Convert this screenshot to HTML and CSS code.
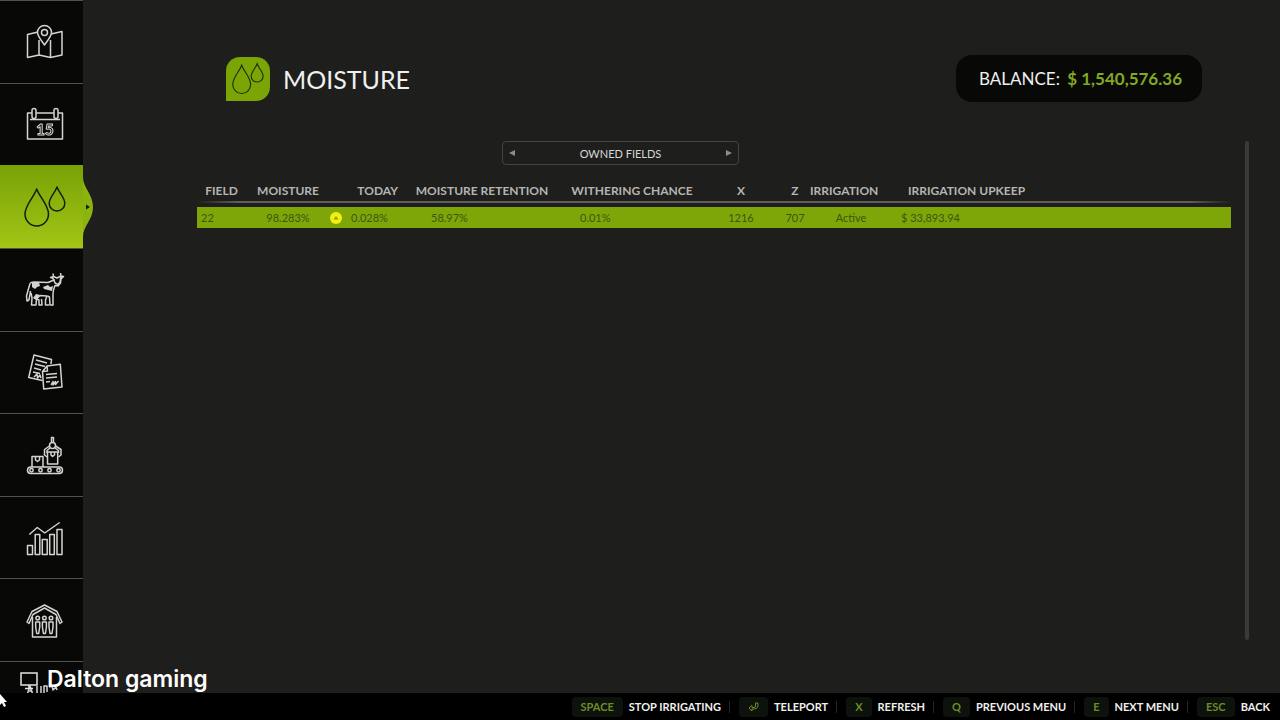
FILE: index.html
```html
<!DOCTYPE html>
<html lang="en">
<head>
    <meta charset="UTF-8">
    <meta name="viewport" content="width=device-width, initial-scale=1.0">
    <title>Moisture</title>
    <link rel="stylesheet" href="styles.css">
</head>
<body>
    <div class="main">
        <nav class="sidebar">
            <a href="#map" class="item" aria-label="Map">
                <svg class="icon" viewBox="0 0 40 40">
                    <path d="M14 10L3.500 12.500V35.500L15 33L26.500 35.500L38 33V9.500L27 12M15 18V33M26.500 18V35.500"/>
                    <path d="M20.500 23C17 18 13.500 14 13.500 10.500A7 7 0 0 1 27.500 10.500C27.500 14 24 18 20.500 23Z"/>
                    <circle cx="20.500" cy="10.500" r="3"/>
                </svg>
            </a>
            <a href="#calendar" class="item" aria-label="Calendar">
                <svg class="icon" viewBox="0 0 40 40">
                    <path d="M8 9H3.500V35H38.500V9H34M12 9H30M6 15.500H36"/>
                    <rect x="8" y="4.500" width="4" height="10" rx="2"/>
                    <rect x="30" y="4.500" width="4" height="10" rx="2"/>
                    <text class="day" x="21" y="31" text-anchor="middle">15</text>
                </svg>
            </a>
            <a href="#moisture" class="item active" aria-label="Moisture">
                <svg class="bulge" viewBox="0 0 10 60">
                    <path class="bulge-shape" d="M0 0C0 11 10 17 10 30S0 49 0 60Z"/>
                    <path class="bulge-arrow" d="M3 27.500L7 30L3 32.500Z"/>
                </svg>
                <svg class="icon" viewBox="0 0 40 40">
                    <path d="M12.700 2C10 10 1 18 1 27A11.700 12 0 0 0 24.500 27C24.500 18 15.500 10 12.700 2Z"/>
                    <path d="M33 0C31 6 25.200 10.500 25.200 16.500A7.800 7.500 0 0 0 40.800 16.500C40.800 10.500 35 6 33 0Z"/>
                </svg>
            </a>
            <a href="#animals" class="item" aria-label="Animals">
                <svg class="icon" viewBox="0 0 40 40">
                    <path d="M6 13.500Q7 12 10 12L24 12.500L30 10L28.500 8L26.500 7.500L29.500 6.500L29 3.500M36.500 3L37 6L39.500 6.500L37 9L36.500 13L34 16L31 15.500L29.500 20L29 24V35H26L25.500 27L23.500 26M29.500 6.500L33 8L37 6L36 12L34 14.500L31 13L30 10"/>
                    <path d="M6 13.500L5 17L2.500 26L3 31L5 30L6.500 21M7 23L8 28L7.500 35H12L12.500 29L16 25.500L23 26L21.500 30V35H25M12.500 29L15 30V35H18L17.500 29"/>
                    <path class="solid" d="M8 13L15 12.500L16 16L13 17L11 19L8 17ZM19 17L24 15L26 17L29 16L28 21L24 20L20 19ZM9 28L12 24L16 25L12 30Z"/>
                </svg>
            </a>
            <a href="#contracts" class="item" aria-label="Contracts">
                <svg class="icon" viewBox="0 0 40 40">
                    <path d="M27 12L27.500 7.500L10 3L4.700 25.500L18.500 28.500"/>
                    <path d="M23 14L36.300 12.300L38 35L19.700 37L18.500 19.500ZM18.500 19.500L23.500 19L23 14"/>
                    <path d="M12 8L23 11M11 12L21 14.500M10 16L17 18M9 20L16 21.500M10 25L13 22L13.500 26L16 23L17 26"/>
                    <path d="M22 22.500L33 21.500M22 26L33 25M22 30L26 29.500M27 33L29 29.500V33L31.500 29.500V32.500L34.500 29"/>
                </svg>
            </a>
            <a href="#production" class="item" aria-label="Production">
                <svg class="icon" viewBox="0 0 40 40">
                    <rect x="3.500" y="32" width="35" height="6.500" rx="3.200"/>
                    <circle cx="7.500" cy="35.200" r="1.700"/>
                    <circle cx="16.500" cy="35.200" r="1.700"/>
                    <circle cx="25.500" cy="35.200" r="1.700"/>
                    <circle cx="34.500" cy="35.200" r="1.700"/>
                    <path d="M8 32V21.500H19V32M11.500 21.500V25L13.500 26.500L15.500 25V21.500"/>
                    <path d="M23.500 17V29H33.700V17ZM27 17V20L28.500 21.500L30.500 20V17"/>
                    <path d="M27.500 8V2.500H29.500V8M25.500 11L20.500 14.500V20L23 22M31.500 11L37 14.500V20L34.500 22M26 13L23 15.500V18M31 13L34.500 15.500V18"/>
                    <circle cx="28.500" cy="10.500" r="3"/>
                </svg>
            </a>
            <a href="#statistics" class="item" aria-label="Statistics">
                <svg class="icon" viewBox="0 0 40 40">
                    <path d="M3.500 27.500H8.500V36.500H3.500ZM11.200 16.500H15.800V36.500H11.200ZM18.300 21.500H23.200V36.500H18.300ZM25.700 16.500H30.300V36.500H25.700ZM33 11.500H38V36.500H33Z"/>
                    <path d="M5.300 16.500L13.300 9.500L20.700 15L35.700 4.500"/>
                </svg>
            </a>
            <a href="#husbandry" class="item" aria-label="Husbandry">
                <svg class="icon" viewBox="0 0 40 40">
                    <path d="M20.500 5L33 11.500L38 22L36 23.500L32 14.500L20.500 8L9 14.500L5 23.500L3 22L8 11.500Z"/>
                    <path d="M8.500 17V37H32.500V17"/>
                    <circle cx="13.700" cy="18" r="1.800"/>
                    <circle cx="20.400" cy="18" r="1.800"/>
                    <circle cx="27" cy="18" r="1.800"/>
                    <path d="M11.700 22H15.700V27L14.700 33.500H12.700L11.700 27ZM18.400 22H22.400V27L21.400 33.500H19.400L18.400 27ZM25 22H29V27L28 33.500H26L25 27Z"/>
                </svg>
            </a>
            <a href="#multiplayer" class="item last" aria-label="Multiplayer">
                <svg class="icon" viewBox="0 0 40 40">
                    <path d="M3 15L6 6L9 15M4 11H8M13 15V6M17 6V15M20 15V6H23V12M25 7L28 6L29 10L32 7L33 10"/>
                </svg>
            </a>
        </nav>

        <main class="content">
            <header class="top">
                <div class="badge">
                    <svg class="badge-icon" viewBox="0 0 42 40">
                        <path d="M12.700 2C10 10 1 18 1 27A11.700 12 0 0 0 24.500 27C24.500 18 15.500 10 12.700 2Z"/>
                        <path d="M33 0C31 6 25.200 10.500 25.200 16.500A7.800 7.500 0 0 0 40.800 16.500C40.800 10.500 35 6 33 0Z"/>
                    </svg>
                </div>
                <h1 class="title">MOISTURE</h1>
                <div class="balance">BALANCE: <span class="amount">$ 1,540,576.36</span></div>
            </header>

            <div class="body">
                <div class="panel">
                    <div class="selector">
                        <button type="button" class="arrow" aria-label="Previous">
                            <svg viewBox="0 0 6 6"><path d="M6 0V6L0 3Z"/></svg>
                        </button>
                        <span>OWNED FIELDS</span>
                        <button type="button" class="arrow" aria-label="Next">
                            <svg viewBox="0 0 6 6"><path d="M0 0V6L6 3Z"/></svg>
                        </button>
                    </div>
                    <table class="fields">
                        <colgroup>
                            <col class="w-field">
                            <col class="w-moisture">
                            <col class="w-today">
                            <col class="w-retention">
                            <col class="w-withering">
                            <col class="w-x">
                            <col class="w-z">
                            <col class="w-irrigation">
                            <col>
                        </colgroup>
                        <thead>
                            <tr>
                                <th>FIELD</th>
                                <th>MOISTURE</th>
                                <th class="today">TODAY</th>
                                <th>MOISTURE RETENTION</th>
                                <th>WITHERING CHANCE</th>
                                <th>X</th>
                                <th>Z</th>
                                <th class="irrigation">IRRIGATION</th>
                                <th class="upkeep">IRRIGATION UPKEEP</th>
                            </tr>
                        </thead>
                        <tbody>
                            <tr>
                                <td class="field">22</td>
                                <td>98.283%</td>
                                <td>
                                    <div class="change">
                                        <svg class="up" viewBox="0 0 12 12"><circle cx="6" cy="6" r="6"/><path d="M3.500 7.500L6 4L8.500 7.500Z"/></svg>
                                        0.028%
                                    </div>
                                </td>
                                <td class="retention">58.97%</td>
                                <td class="withering">0.01%</td>
                                <td>1216</td>
                                <td>707</td>
                                <td>Active</td>
                                <td class="upkeep">$ 33,893.94</td>
                            </tr>
                        </tbody>
                    </table>
                </div>
                <div class="scrollbar"></div>
            </div>
        </main>
    </div>

    <footer class="hints">
        <button type="button" class="hint"><kbd>SPACE</kbd>STOP IRRIGATING</button>
        <button type="button" class="hint">
            <kbd><svg class="enter" viewBox="0 0 11 10"><path d="M7.500 1H10V4Q9.500 7 6 7H4V9L1 6L4 3.500V5.500H6Q7.500 5.500 7.500 4Z"/></svg></kbd>TELEPORT
        </button>
        <button type="button" class="hint"><kbd>X</kbd>REFRESH</button>
        <button type="button" class="hint"><kbd>Q</kbd>PREVIOUS MENU</button>
        <button type="button" class="hint"><kbd>E</kbd>NEXT MENU</button>
        <button type="button" class="hint"><kbd>ESC</kbd>BACK</button>
    </footer>

    <div class="watermark">
        <svg class="monitor" viewBox="0 0 18 18">
            <path d="M1 1H17V13H1ZM9 13V16M5 16.500H13"/>
        </svg>
        Dalton gaming
    </div>
    <svg class="cursor" viewBox="0 0 8 14"><path d="M0 0L7 8H4L6 12L4 13L2 9L0 11Z"/></svg>
</body>
</html>
```
FILE: styles.css
```css
*{
    box-sizing: border-box;
}
body{
    margin: 0;
    height: 100vh;
    display: flex;
    flex-direction: column;
    overflow: hidden;
    position: relative;
    background: #1e1e1d;
    color: #f0f0ee;
    font-family: Lato, "Open Sans", sans-serif;
}
button{
    padding: 0;
    border: none;
    background: none;
    color: inherit;
    font: inherit;
    cursor: pointer;
}
.main{
    flex: 1;
    min-height: 0;
    display: flex;
}

/* left menu */
.sidebar{
    width: 83px;
    display: flex;
    flex-direction: column;
    background: #080907;
}
.item{
    flex: 1 1 0;
    min-height: 0;
    display: flex;
    align-items: center;
    padding-left: 24px;
    border-top: 1px solid #51524f;
    position: relative;
}
.item.last{
    flex: 0 0 32px;
    align-items: flex-start;
    padding-top: 18px;
    overflow: hidden;
}
.item.active{
    background: linear-gradient(#79a206, #a2c516);
    border-top-color: #79a206;
}
.icon{
    width: 40px;
    height: 40px;
    flex: none;
    overflow: visible;
    fill: none;
    stroke: #d3d4cf;
    stroke-width: 1.5;
    stroke-linejoin: round;
}
.icon .solid{
    fill: #d3d4cf;
    stroke: none;
}
.icon .day{
    font-size: 15px;
    font-weight: 900;
    stroke-width: 1;
    filter: grayscale(1);
}
.active .icon{
    stroke: #10200a;
}
.bulge{
    position: absolute;
    left: 100%;
    top: 11px;
    width: 10px;
    height: 60px;
}
.bulge-shape{
    fill: #8cb40e;
}
.bulge-arrow{
    fill: #10200a;
}

/* page header */
.content{
    flex: 1;
    min-width: 0;
    display: flex;
    flex-direction: column;
    padding: 55px 30px 53px 114px;
}
.top{
    display: flex;
    align-items: center;
    padding: 0 48px 0 29px;
}
.badge{
    width: 44px;
    height: 44px;
    display: flex;
    align-items: center;
    justify-content: center;
    background: #7ba505;
    border-radius: 14px 14px 14px 0;
}
.badge-icon{
    width: 32px;
    height: 32px;
    overflow: visible;
    fill: none;
    stroke: #17330a;
    stroke-width: 1.5;
}
.title{
    margin: 0 0 0 13px;
    font-size: 25px;
    line-height: 32px;
    font-weight: 400;
}
.balance{
    margin-left: auto;
    padding: 0 20px 0 23px;
    font-size: 17px;
    line-height: 47px;
    background: #080907;
    border-radius: 16px;
}
.amount{
    margin-left: 3px;
    color: #83a823;
    font-weight: 700;
}

/* fields list */
.body{
    flex: 1;
    display: flex;
    gap: 14px;
    margin-top: 39px;
}
.panel{
    flex: 1;
}
.scrollbar{
    width: 4px;
    margin-right: 1px;
    flex: none;
    background: #3a3a39;
    border-radius: 2px;
}
.selector{
    width: 237px;
    height: 24px;
    display: flex;
    align-items: center;
    justify-content: space-between;
    margin-left: 305px;
    padding: 0 6px;
    border: 1px solid #444442;
    border-radius: 4px;
    font-size: 11px;
    color: #d8d8d5;
}
.arrow{
    width: 6px;
    height: 24px;
    display: flex;
    align-items: center;
}
.arrow svg{
    width: 6px;
    height: 6px;
    fill: #8d8d8a;
}
.fields{
    width: 100%;
    table-layout: fixed;
    border-collapse: collapse;
    margin-top: 14px;
    font-size: 11px;
}
.fields th, .fields td{
    padding: 0;
    text-align: center;
    white-space: nowrap;
}
.fields th{
    height: 28px;
    padding-bottom: 6px;
    font-size: 12px;
    color: #b5b5b2;
}
.fields thead tr{
    background: linear-gradient(90deg, transparent, #625d58 4%, #625d58 96%, transparent) 0 22px / 100% 2px no-repeat;
}
.fields tbody tr{
    height: 21px;
    background: #7ea609;
    color: #3c560d;
}
.w-field{ width: 49px; }
.w-moisture{ width: 84px; }
.w-today{ width: 72px; }
.w-retention{ width: 160px; }
.w-withering{ width: 140px; }
.w-x{ width: 78px; }
.w-z{ width: 30px; }
.w-irrigation{ width: 82px; }
.fields th.today{
    text-align: right;
    padding-right: 4px;
}
.fields th.irrigation{
    text-align: left;
}
.fields th.upkeep{
    text-align: left;
    padding-left: 16px;
}
.fields td.field{
    text-align: left;
    padding-left: 4px;
}
.fields td.retention{
    text-align: left;
    padding-left: 29px;
}
.fields td.withering{
    text-align: left;
    padding-left: 18px;
}
.fields td.upkeep{
    text-align: left;
    padding-left: 9px;
}
.change{
    display: flex;
    align-items: center;
    gap: 9px;
}
.up{
    width: 12px;
    height: 12px;
    fill: #f2f00c;
}
.up path{
    fill: #8d9c0a;
}

/* key hints */
.hints{
    height: 27px;
    display: flex;
    align-items: center;
    justify-content: flex-end;
    padding-right: 10px;
    background: #000;
}
.hint{
    display: flex;
    align-items: center;
    gap: 6px;
    font-size: 11px;
    font-weight: 700;
}
.hint + .hint{
    margin-left: 8px;
    padding-left: 10px;
    background: linear-gradient(#242424, #242424) 0 50% / 1px 12px no-repeat;
}
.hint kbd{
    height: 20px;
    display: flex;
    align-items: center;
    padding: 0 9px;
    background: #0e120c;
    border-radius: 4px;
    color: #6d8c25;
    font: inherit;
}
.enter{
    width: 11px;
    height: 10px;
    fill: none;
    stroke: #6d8c25;
}

/* stream overlay */
.watermark{
    position: absolute;
    left: 20px;
    bottom: 27px;
    display: flex;
    align-items: center;
    gap: 9px;
    font-family: Inter, sans-serif;
    font-size: 23px;
    line-height: 28px;
    font-weight: 600;
    color: #fff;
}
.monitor{
    width: 18px;
    height: 18px;
    margin-top: 4px;
    fill: none;
    stroke: #e4e4e4;
    stroke-width: 1.5;
}
.cursor{
    position: absolute;
    left: 0;
    bottom: 12px;
    width: 8px;
    height: 14px;
    fill: #fff;
}
```
